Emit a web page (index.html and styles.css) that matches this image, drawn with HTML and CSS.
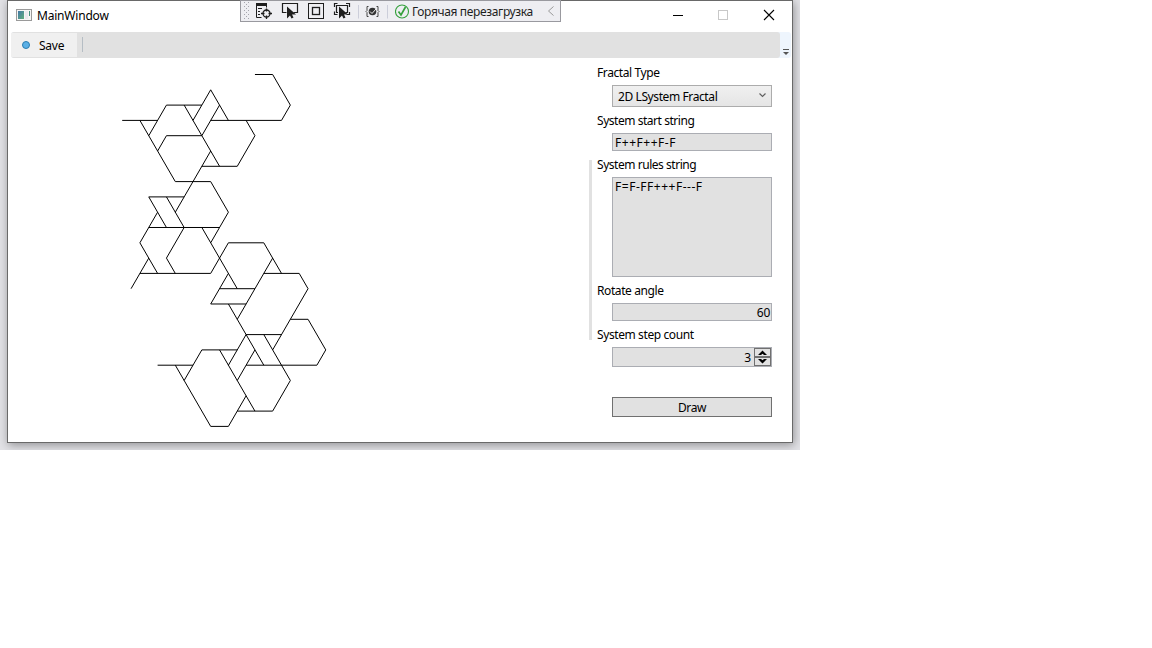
FILE: index.html
```html
<!DOCTYPE html>
<html lang="en">
<head>
<meta charset="utf-8">
<title>MainWindow</title>
<link rel="stylesheet" href="styles.css">
</head>
<body>
<div class="desktop">
<div class="window">
  <header class="titlebar">
    <svg class="app-icon" width="16" height="12" viewBox="0 0 16 12">
      <rect x=".5" y=".5" width="15" height="11" fill="#f5f5f5" stroke="#9a9a9a"/>
      <rect x="2" y="2" width="6" height="8" fill="url(#app)"/>
      <rect x="9" y="2" width="3" height="8" fill="#e9e9ee"/><rect x="13" y="2" width="1" height="5" fill="#489080"/>
      <defs><linearGradient id="app" x2="1" y2="1"><stop stop-color="#4378a8"/><stop offset="1" stop-color="#5fae7c"/></linearGradient></defs>
    </svg>
    <span class="title">MainWindow</span>
    <div class="caption">
      <svg width="120" height="30" viewBox="0 0 120 30" shape-rendering="crispEdges" fill="none">
        <path d="M10 15.5h10" stroke="#000"/>
        <rect x="55.500" y="10.500" width="9" height="9" stroke="#c8c8c8"/>
        <path d="M101 10l10 10M111 10l-10 10" stroke="#000" shape-rendering="auto" stroke-width="1.100"/>
      </svg>
    </div>
  </header>
  <div class="toolbar">
    <div class="tray"><div class="save"><i class="dot"></i><span class="save-text">Save</span></div><i class="divider"></i></div>
    <div class="overflow"><svg width="6" height="6" viewBox="0 0 6 6"><path d="M0 .5h6" stroke="#555"/><path d="M0 3h6L3 6z" fill="#555"/></svg></div>
  </div>
  <main class="content">
    <div class="canvas">
      <svg class="fractal" width="220" height="370">
        <g transform="translate(6.200 6.500) scale(8.850 15.300)">
          <path class="line" d="M15 0H17L19 2L18 3H10M0 3H4M2 3L6 7H10L12 9L10 11M3 4L5 2H9M4 5L5 4H9M7 2L11 6M8 3L10 1L12 3M11 2L9 4M14 3L15 4L13 6H9M10 5L6 9"/>
          <path class="line" d="M3 8H7M3 8L5 10M5 8L7 10L5 12L6 13M4 9L2 11L4 13M3 10H11M9 10L13 14M3 12L1 14M2 13H10L12 11H16L18 13M16 13H20L21 14L17 18M17 12L13 16M12 13L10 15H14M11 14H15"/>
          <path class="line" d="M12 15L16 19M14 17H18M19 16H21L23 18L22 19H14M16 17L19 20L17 22H13M14 17L12 19M15 18L13 20M9 18H13M9 18L7 20M4 19H8M6 19L10 23H12L14 21M11 18L15 22"/>
        </g>
      </svg>
    </div>
    <i class="splitter"></i>
    <form class="panel">
      <label class="label">Fractal Type</label>
      <div class="field combo"><span class="combo-text">2D LSystem Fractal</span><svg width="7" height="5" viewBox="0 0 7 5"><path d="M.5 .5l3 3 3-3" fill="none" stroke="#606060" stroke-width="1.200"/></svg></div>
      <label class="label tight">System start string</label>
      <div class="field input"><span class="symbols">F++F++F-F</span></div>
      <label class="label tight">System rules string</label>
      <div class="field area"><span class="symbols">F=F-FF+++F---F</span></div>
      <label class="label">Rotate angle</label>
      <div class="field input num"><span class="digits">60</span></div>
      <label class="label">System step count</label>
      <div class="field stepper"><span>3</span>
        <svg width="18" height="20" viewBox="0 0 18 20"><g fill="#e1e1e1" stroke="#707070"><rect x=".5" y="1.500" width="16" height="8"/><rect x=".5" y="10.500" width="16" height="8"/></g><path d="M4 8l4.500-4.500 4.500 4.500h-3l-1.500-1.300-1.500 1.300zM4 12h3l1.500 1.300 1.500-1.300h3l-4.500 4.500z" fill="#000"/></svg>
      </div>
      <div class="draw"><span>Draw</span></div>
    </form>
  </main>
</div>
<div class="debugbar">
  <svg width="154" height="21" viewBox="0 0 154 21" fill="none">
    <path fill="#a5a5ad" d="M3 1h1v1h-1zM7 1h1v1h-1zM5 3h1v1h-1zM3 5h1v1h-1zM7 5h1v1h-1zM5 7h1v1h-1zM3 9h1v1h-1zM7 9h1v1h-1zM5 11h1v1h-1zM3 13h1v1h-1zM7 13h1v1h-1zM5 15h1v1h-1zM3 17h1v1h-1zM7 17h1v1h-1z"/>
    <g stroke="#1e1e1e">
      <path d="M15 3.500h11" stroke-width="3"/><path d="M15.500 4v12.500h5M25.500 5v1.500M17 7.500h4M17 10.500h2M17 13.500h2" />
      <circle cx="25.500" cy="12.500" r="3.500" stroke-width="1.300"/><path d="M25.500 7.500v3M25.500 14.500v3.500M20 12.500h3.500M27.500 12.500h3.500" stroke-width="1.300"/>
      <path d="M45.500 11.500h-4v-9h15v9h-4" stroke-width="1.200"/>
      <rect x="67.500" y="2.500" width="15" height="15"/><rect x="71.500" y="6.500" width="7" height="7" stroke-width="1.300"/>
      <path d="M93.500 6v-3.500h3M105 2.500h3.500v3.500M93.500 10.500v3h3M108.500 11v2.500h-3M97 11.500h-1.500v-7h11v7h-2" stroke-width="1.200"/>
    </g>
    <path d="M46 5.500v12l3-3 1.500 3 2-1-1.500-3h4zM98 5.500v12l3-3 1.500 3 2-1-1.500-3h4z" fill="#1e1e1e"/>
    <path d="M117.500 4v13.500M146.500 4v13.500" stroke="#ccceda"/>
    <path d="M127.500 5.500h-1.500v4l-1 1 1 1v4h1.500M135.500 5.500h1.500v4l1 1-1 1v4h-1.500" stroke="#444"/>
    <circle cx="131.500" cy="10.500" r="3.800" fill="#333"/><path d="M129 10.500l2 2 4-4.500" stroke="#eee"/>
  </svg>
  <svg width="17" height="21" viewBox="0 0 17 21" fill="none"><circle cx="7" cy="10.500" r="6.500" stroke="#35a03c" stroke-width="1.100"/><path d="M3.500 10.500l2.500 3.500 4.500-8" stroke="#35a03c" stroke-width="1.700"/></svg>
  <span class="reload">Горячая перезагрузка</span>
  <svg class="chev" width="6" height="10" viewBox="0 0 6 10"><path d="M5.500 .5l-5 4.500 5 4.500" fill="none" stroke="#999"/></svg>
</div>
</div>
</body>
</html>
```
FILE: styles.css
```css
* { box-sizing: border-box; }
body { margin: 0; background: #fff; font: 12px/16px "Noto Sans", "Open Sans", sans-serif; color: #000; overflow: hidden; }
svg { display: block; flex: none; }
span, label { white-space: nowrap; }
.desktop { position: relative; width: 800px; height: 450px; padding-left: 7px; background: #e2e2e6; overflow: hidden; }
.window { width: 786px; height: 443px; border: 1px solid #696969; background: #fff; box-shadow: 1px 2px 9px rgba(0,0,0,.36); display: flex; flex-direction: column; }
.titlebar { height: 31px; display: flex; align-items: flex-start; padding-left: 8px; }
.app-icon { margin-top: 8px; }
.title { margin: 7px 0 0 5px; letter-spacing: -.2px; }
.caption { margin: -1px 9px 0 auto; }
.toolbar { height: 26px; margin: 0 1px 0 3px; display: flex; background: #eef5fd; border-radius: 3px; }
.tray { width: 769px; background: #e1e1e1; border-radius: 3px; display: flex; }
.save { width: 66px; height: 24px; margin-top: 1px; background: #f0f0f0; display: flex; align-items: center; padding-left: 11px; }
.dot { width: 8px; height: 8px; border-radius: 50%; background: #5bb0e6; border: 1px solid #2b7db1; }
.save-text { margin: 1px 0 0 9px; letter-spacing: -.25px; }
.divider { width: 1px; height: 15px; margin: 5px 0 0 5px; background: #b5bdc4; }
.overflow { flex: 1; display: flex; justify-content: center; align-items: flex-end; padding-bottom: 3px; }
.content { display: flex; flex: 1; min-height: 0; }
.canvas { width: 581px; padding: 10px 0 0 108px; }
.fractal { overflow: visible; }
.line { fill: none; stroke: #000; stroke-width: 1px; vector-effect: non-scaling-stroke; shape-rendering: crispEdges; }
.splitter { width: 3px; height: 180px; margin-top: 102px; background: #e1e1e1; }
.panel { width: 180px; margin-left: 5px; padding-top: 7px; display: flex; flex-direction: column; }
.label { height: 16px; letter-spacing: -.4px; flex: none; }
.tight { letter-spacing: -.46px; }
.field { width: 160px; margin-left: 15px; border: 1px solid #abadb3; background: #e1e1e1; flex: none; display: flex; }
.combo { height: 22px; margin-top: 4px; margin-bottom: 6px; background: linear-gradient(#f0f0f0, #e5e5e5); border-color: #acacac; align-items: center; padding: 2px 5px 0; justify-content: space-between; }
.combo svg { margin-top: -3px; }
.combo-text { letter-spacing: -.4px; }
.symbols { letter-spacing: .52px; }
.digits { letter-spacing: -.3px; }
.input { height: 18px; margin-top: 4px; margin-bottom: 6px; padding: 1px 2px; }
.area { height: 100px; margin-top: 4px; margin-bottom: 6px; padding: 1px 2px; }
.num { justify-content: flex-end; padding-right: 1px; }
.stepper { height: 20px; margin-top: 4px; justify-content: flex-end; }
.stepper span { margin: 2px 3px 0 0; }
.stepper svg { margin: -1px -1px 0 0; }
.draw { width: 160px; height: 20px; margin: 30px 0 0 15px; border: 1px solid #707070; background: #e1e1e1; text-align: center; padding-top: 2px; letter-spacing: -.4px; }
.debugbar { position: absolute; left: 240px; top: 0; width: 321px; height: 22px; border: 1px solid #99999f; background: #eeeef2; display: flex; color: #1e1e1e; }
.reload { margin: 3px 0 0 0; letter-spacing: -.35px; }
.chev { margin: 5px 6px 0 auto; }
```
